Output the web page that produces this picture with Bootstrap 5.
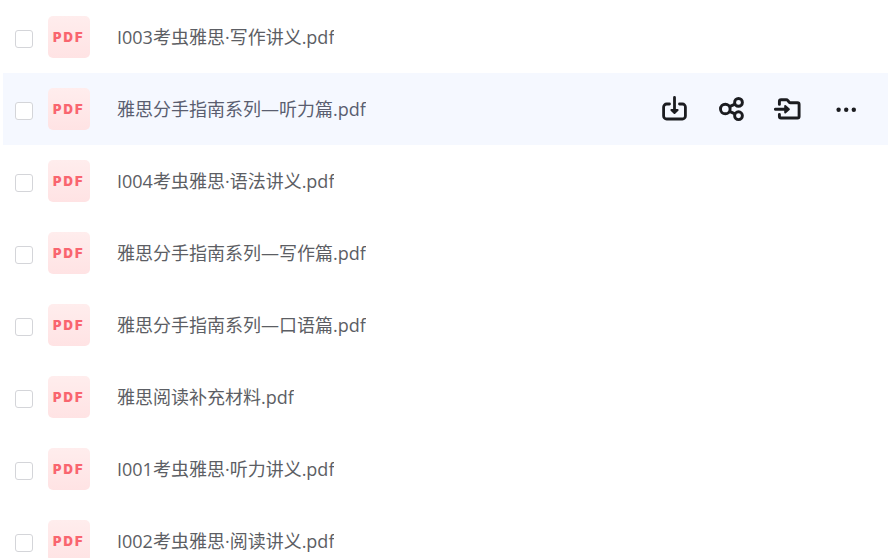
<!DOCTYPE html>
<html lang="zh-CN">
<head>
<meta charset="utf-8">
<meta name="viewport" content="width=device-width, initial-scale=1">
<title>文件列表</title>
<link href="https://cdn.jsdelivr.net/npm/bootstrap@5.3.0/dist/css/bootstrap.min.css" rel="stylesheet">
<style>
body { font-family: "Open Sans", "Noto Sans CJK SC", sans-serif; background: #fff; overflow-x: hidden; }
.file-list { padding: 1px 0 0 3px; }
.file-row { height: 72px; padding: 0 28px 0 12px; color: #5c5e64; }
.file-row.is-active { background: #f5f8ff; color: #5a5e70; }
.file-row .form-check-input { width: 18px; height: 18px; margin: 4px 15px 0 0; border: 1px solid #d4d5d9; border-radius: 3px; background-color: #fff; }
.file-type { width: 42px; height: 42px; margin-right: 27px; border-radius: 5px; background: linear-gradient(#ffeded, #ffe3e4); }
.file-type text { font: 900 13px Inter, sans-serif; letter-spacing: 2px; }
.file-name { font-size: 18px; line-height: 26px; color: inherit; }
.file-actions { gap: 28px; }
.file-actions .btn { width: 29px; height: 30px; color: #1b1c20; }
</style>
</head>
<body>
<ul class="file-list list-unstyled mb-0" id="files"></ul>

<template id="row-template">
  <li class="file-row d-flex align-items-center">
    <input class="form-check-input flex-shrink-0" type="checkbox">
    <span class="file-type flex-shrink-0 d-flex">
      <svg width="42" height="42" viewBox="0 0 42 42" aria-hidden="true"><text x="5" y="26" fill="#f9656f">PDF</text></svg>
    </span>
    <label class="file-name text-truncate"></label>
  </li>
</template>

<template id="actions-template">
  <div class="file-actions d-flex align-items-center ms-auto flex-shrink-0">
    <button type="button" class="btn p-0 border-0 d-flex" aria-label="下载">
      <svg width="29" height="30" viewBox="0 0 29 30" fill="none" stroke="currentColor" stroke-width="2.8" stroke-linecap="round" stroke-linejoin="round"><path d="M9.5 10H6.6a3 3 0 0 0-3 3v9a3 3 0 0 0 3 3h15.8a3 3 0 0 0 3-3v-9a3 3 0 0 0-3-3h-2.9M14.5 3.4v14"/><path d="M11.4 16h6.2l-3.1 3z" stroke-width="2" fill="currentColor"/></svg>
    </button>
    <button type="button" class="btn p-0 border-0 d-flex" aria-label="分享">
      <svg width="29" height="30" viewBox="0 0 29 30" fill="none" stroke="currentColor" stroke-width="2.9"><circle cx="8.3" cy="15" r="4.8"/><circle cx="21.5" cy="8.4" r="3.9"/><circle cx="21.5" cy="21.7" r="3.9"/><path d="M12.5 12.6 18 10.1M12.5 17.4l5.5 2.5"/></svg>
    </button>
    <button type="button" class="btn p-0 border-0 d-flex" aria-label="移动到">
      <svg width="29" height="30" viewBox="0 0 29 30" fill="none" stroke="currentColor" stroke-width="2.9" stroke-linecap="round" stroke-linejoin="round"><path d="M5.4 10.4V7.4q0-1.7 1.7-1.7h5.1q1 0 1.6.8l1.3 1.6q.5.7 1.4.7h7q1.6 0 1.6 1.6v12q0 1.6-1.6 1.6H7q-1.6 0-1.6-1.6V20.4M1.4 15.3h11"/><path d="M11.2 12v6.6l3.7-3.3z" stroke-width="2" fill="currentColor"/></svg>
    </button>
    <button type="button" class="btn p-0 border-0 d-flex" aria-label="更多">
      <svg width="29" height="30" viewBox="0 0 29 30" fill="currentColor"><circle cx="7.6" cy="15.7" r="2.2"/><circle cx="15.2" cy="15.7" r="2.2"/><circle cx="22.8" cy="15.7" r="2.2"/></svg>
    </button>
  </div>
</template>

<script src="https://cdn.jsdelivr.net/npm/bootstrap@5.3.0/dist/js/bootstrap.bundle.min.js"></script>
<script>
const names = [
  'I003考虫雅思·写作讲义.pdf',
  '雅思分手指南系列—听力篇.pdf',
  'I004考虫雅思·语法讲义.pdf',
  '雅思分手指南系列—写作篇.pdf',
  '雅思分手指南系列—口语篇.pdf',
  '雅思阅读补充材料.pdf',
  'I001考虫雅思·听力讲义.pdf',
  'I002考虫雅思·阅读讲义.pdf'
];
const list = document.getElementById('files');
names.forEach((name, i) => {
  const row = document.getElementById('row-template').content.firstElementChild.cloneNode(true);
  row.querySelector('input').id = 'file-' + i;
  const label = row.querySelector('label');
  label.htmlFor = 'file-' + i;
  label.textContent = name;
  if (i === 1) {
    row.classList.add('is-active');
    row.append(document.getElementById('actions-template').content.cloneNode(true));
  }
  list.append(row);
});
</script>
</body>
</html>
